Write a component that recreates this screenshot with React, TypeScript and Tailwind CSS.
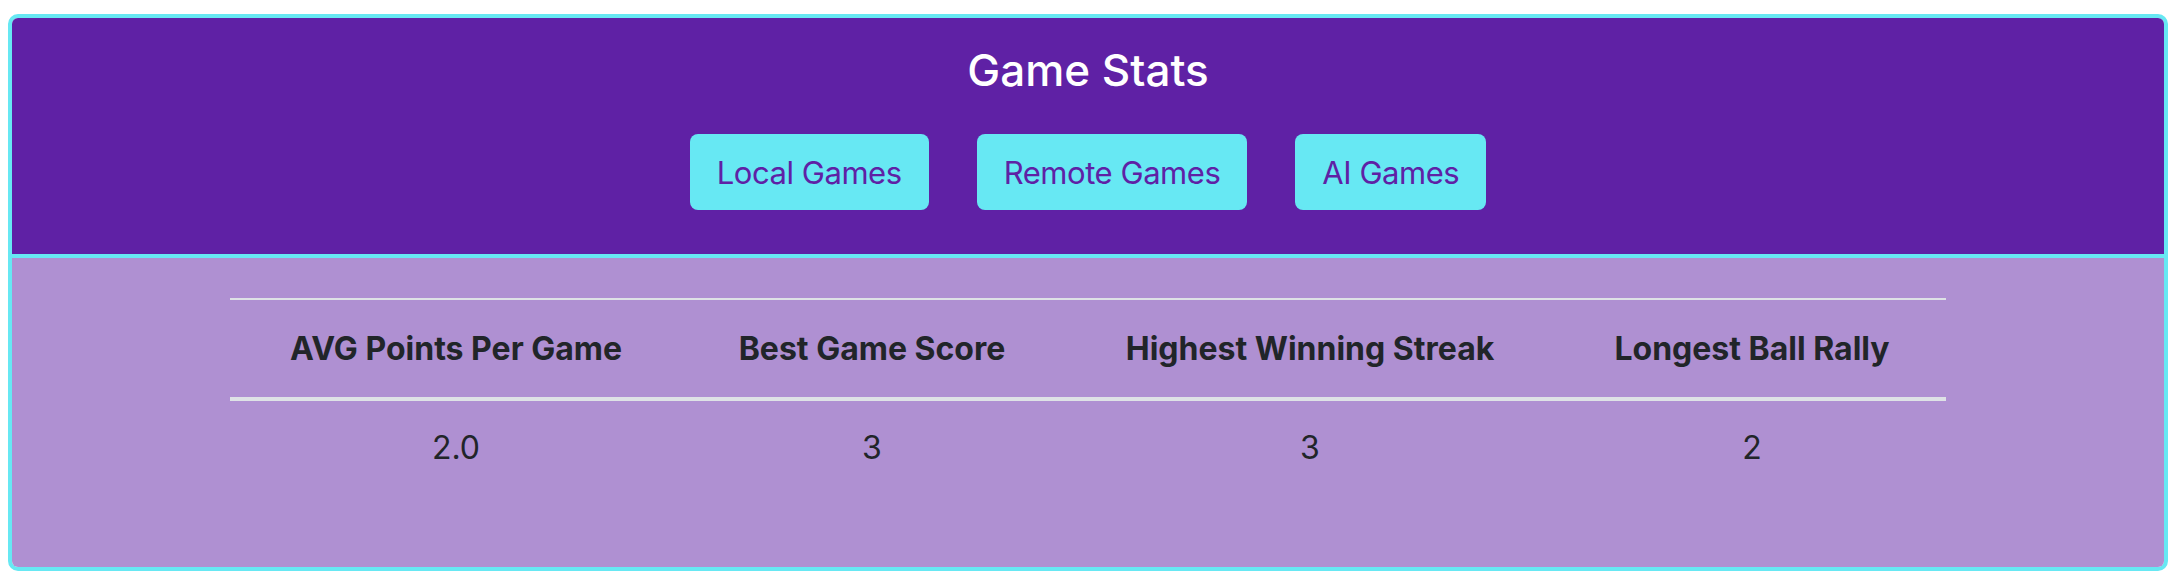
const headers = [
  "AVG Points Per Game",
  "Best Game Score",
  "Highest Winning Streak",
  "Longest Ball Rally",
];

const values = ["2.0", "3", "3", "2"];

const tabs = ["Local Games", "Remote Games", "AI Games"];

export default function App() {
  return (
    <div className="min-h-[584px] bg-white pt-[14px] pl-[8px] font-['Inter',sans-serif]">
      <div className="w-[2160px] h-[557px] border-[4px] border-[#67e8f3] rounded-[10px] overflow-hidden flex flex-col">
        {/* Header */}
        <div className="h-[236px] shrink-0 bg-[#5f21a5] flex flex-col items-center pt-[26px]">
          <h1 className="text-white text-[44px] leading-[53px] font-medium">
            Game Stats
          </h1>
          <div className="flex gap-[48px] mt-[37px]">
            {tabs.map((tab) => (
              <button
                key={tab}
                className="h-[76px] px-[27px] rounded-[8px] bg-[#67e8f3] text-[#5f21a5] text-[31px] tracking-[-0.45px] leading-none flex items-center"
              >
                {tab}
              </button>
            ))}
          </div>
        </div>

        {/* Stats table */}
        <div className="flex-1 border-t-[4px] border-[#67e8f3] bg-[#af90d2] pt-[40px]">
          <table className="w-[1716px] mx-auto table-fixed border-collapse text-[#212529] text-[32px]">
            <colgroup>
              <col className="w-[452px]" />
              <col className="w-[380px]" />
              <col className="w-[496px]" />
              <col className="w-[388px]" />
            </colgroup>
            <thead>
              <tr>
                {headers.map((h) => (
                  <th
                    key={h}
                    className="h-[100px] border-t-[2px] border-b-[4px] border-[#dee2e6] font-bold leading-[48px] text-center align-middle whitespace-nowrap"
                  >
                    {h}
                  </th>
                ))}
              </tr>
            </thead>
            <tbody>
              <tr>
                {values.map((v, i) => (
                  <td key={i} className="h-[96px] text-center align-middle leading-[48px]">
                    {v}
                  </td>
                ))}
              </tr>
            </tbody>
          </table>
        </div>
      </div>
    </div>
  );
}
